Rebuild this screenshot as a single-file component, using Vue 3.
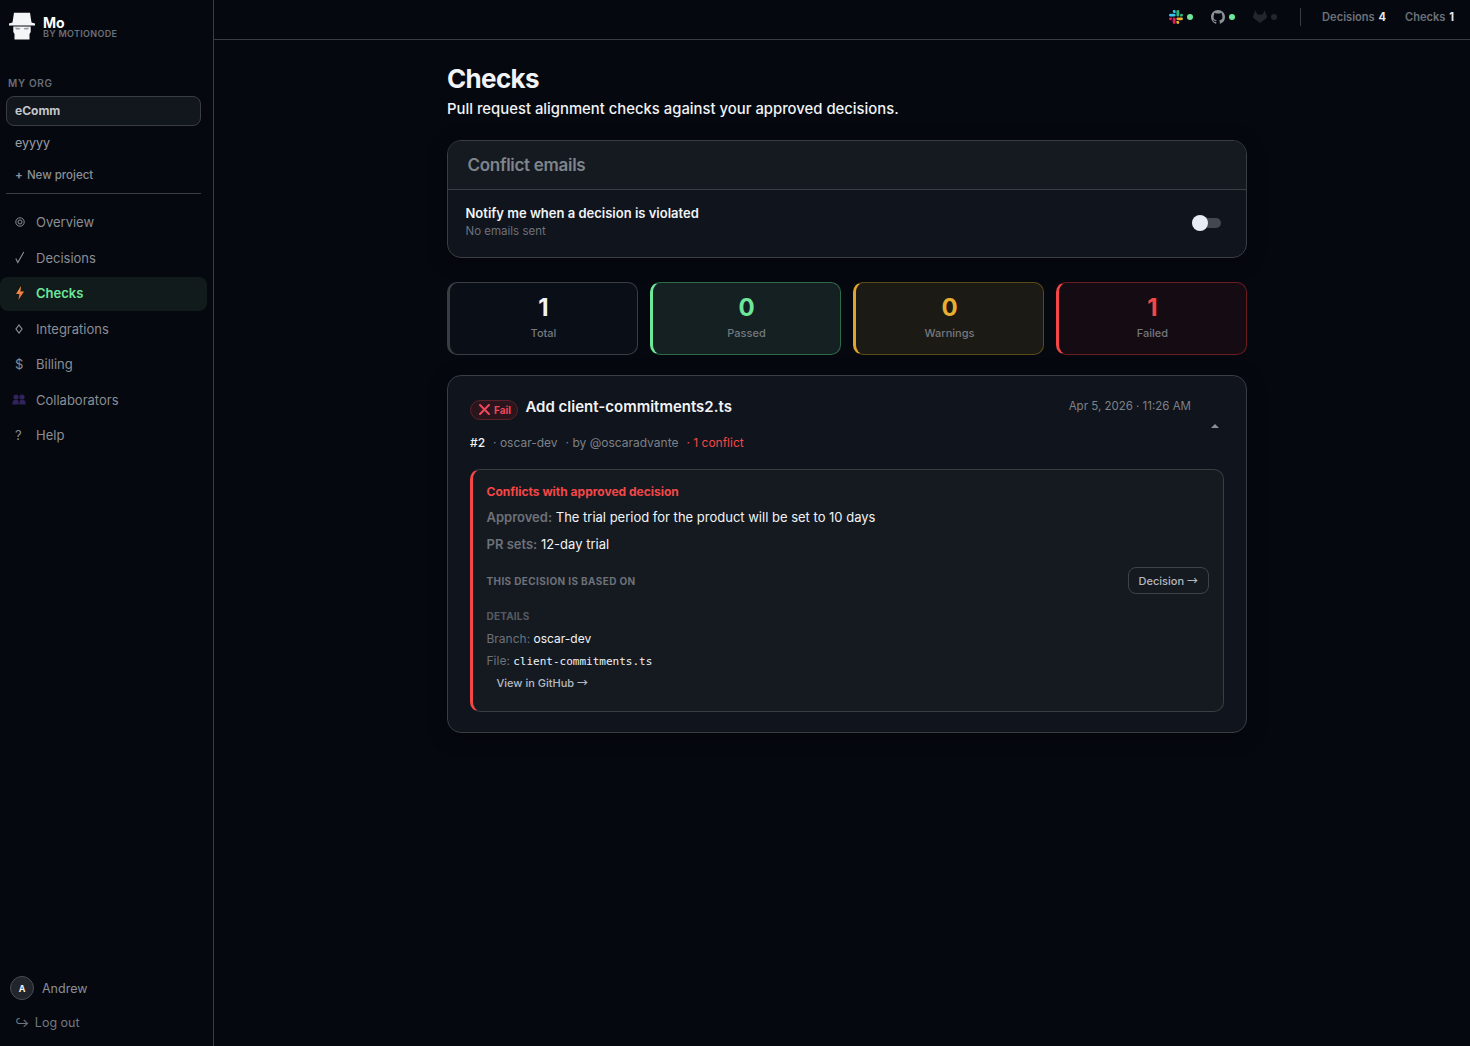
<template>
  <div class="app">
    <aside class="sidebar">
      <div class="brand">
        <svg class="brand__logo" width="28" height="28" viewBox="0 0 28 28">
          <path d="M6 0.7 L22 0.7 L23.5 10.5 L27 11.5 L27 13.4 L1 13.4 L1 11.5 L4.5 10.5 Z" fill="#f4f5f7" />
          <path d="M5.3 14.5 L22.7 14.5 L22.7 20 L21.5 22 L21.5 27.5 L6.5 27.5 L6.5 22 L5.3 20 Z" fill="#f4f5f7" />
          <path d="M7 15.5 L12.5 16 L11.5 17.5 L8 17.5 Z M21 15.5 L15.5 16 L16.5 17.5 L20 17.5 Z" fill="#9a9ea5" />
        </svg>
        <div class="brand__text">
          <div class="brand__name">Mo</div>
          <div class="brand__by">BY MOTIONODE</div>
        </div>
      </div>

      <div class="org-label">MY ORG</div>
      <div class="project project--active">eComm</div>
      <div class="project">eyyyy</div>
      <div class="new-project"><span class="new-project__plus">+</span> New project</div>
      <div class="side-rule"></div>

      <nav class="nav">
        <a v-for="item in navItems" :key="item.label" class="nav__item" :class="{ 'nav__item--active': item.active }">
          <span class="nav__icon">
            <svg v-if="item.icon === 'bolt'" width="10" height="14" viewBox="0 0 10 14">
              <defs>
                <linearGradient id="bolt-fill" x1="0" y1="0" x2="0" y2="1">
                  <stop offset="0" stop-color="#f9a03f" />
                  <stop offset="1" stop-color="#f2603c" />
                </linearGradient>
              </defs>
              <path d="M6 0 L1 8 L4.4 8 L3.4 14 L9 5.6 L5.4 5.6 Z" fill="url(#bolt-fill)" />
            </svg>
            <svg v-else-if="item.icon === 'people'" class="nav__people" width="14" height="11" viewBox="0 0 14 11">
              <circle cx="4" cy="3" r="2.6" fill="#33235c" />
              <circle cx="10" cy="3" r="2.6" fill="#33235c" />
              <path d="M0.5 10.5 V8 Q0.5 6 3 6 H5 Q6.6 6 6.6 8 V10.5 Z M7.4 10.5 V8 Q7.4 6 9 6 H11 Q13.5 6 13.5 8 V10.5 Z" fill="#33235c" />
            </svg>
            <svg v-else-if="item.icon === 'diamond'" width="8" height="10" viewBox="0 0 8 10">
              <path d="M4 1 L7 5 L4 9 L1 5 Z" fill="none" stroke="#8a8e95" stroke-width="1.2" />
            </svg>
            <svg v-else-if="item.icon === 'target'" width="10" height="10" viewBox="0 0 10 10">
              <circle cx="5" cy="5" r="4.2" fill="none" stroke="#8a8e95" stroke-width="1" />
              <circle cx="5" cy="5" r="2" fill="none" stroke="#8a8e95" stroke-width="1" />
            </svg>
            <svg v-else-if="item.icon === 'check'" width="10" height="13" viewBox="0 0 10 13">
              <path d="M0.8 7.4 L2.8 11.6 L8.8 1" fill="none" stroke="#8a8e95" stroke-width="1.1" />
            </svg>
            <template v-else>{{ item.icon }}</template>
          </span>
          <span>{{ item.label }}</span>
        </a>
      </nav>

      <div class="side-foot">
        <div class="user">
          <span class="user__avatar">A</span>
          <span>Andrew</span>
        </div>
        <div class="logout"><span class="logout__icon">↪</span> Log out</div>
      </div>
    </aside>

    <div class="body">
      <header class="topbar">
        <div class="status">
          <svg width="14" height="14" viewBox="0 0 24 24">
            <path fill="#e01e5a" d="M5.042 15.165a2.528 2.528 0 0 1-2.52 2.523A2.528 2.528 0 0 1 0 15.165a2.527 2.527 0 0 1 2.522-2.52h2.52v2.52zM6.313 15.165a2.527 2.527 0 0 1 2.521-2.52 2.527 2.527 0 0 1 2.521 2.52v6.313A2.528 2.528 0 0 1 8.834 24a2.528 2.528 0 0 1-2.521-2.522v-6.313z" />
            <path fill="#36c5f0" d="M8.834 5.042a2.528 2.528 0 0 1-2.521-2.52A2.528 2.528 0 0 1 8.834 0a2.528 2.528 0 0 1 2.521 2.522v2.52H8.834zM8.834 6.313a2.528 2.528 0 0 1 2.521 2.521 2.528 2.528 0 0 1-2.521 2.521H2.522A2.528 2.528 0 0 1 0 8.834a2.528 2.528 0 0 1 2.522-2.521h6.312z" />
            <path fill="#2eb67d" d="M18.956 8.834a2.528 2.528 0 0 1 2.522-2.521A2.528 2.528 0 0 1 24 8.834a2.528 2.528 0 0 1-2.522 2.521h-2.522V8.834zM17.688 8.834a2.528 2.528 0 0 1-2.523 2.521 2.527 2.527 0 0 1-2.52-2.521V2.522A2.527 2.527 0 0 1 15.165 0a2.528 2.528 0 0 1 2.523 2.522v6.312z" />
            <path fill="#ecb22e" d="M15.165 18.956a2.528 2.528 0 0 1 2.523 2.522A2.528 2.528 0 0 1 15.165 24a2.527 2.527 0 0 1-2.52-2.522v-2.522h2.52zM15.165 17.688a2.527 2.527 0 0 1-2.52-2.523 2.526 2.526 0 0 1 2.52-2.52h6.313A2.527 2.527 0 0 1 24 15.165a2.528 2.528 0 0 1-2.522 2.523h-6.313z" />
          </svg>
          <span class="dot dot--on"></span>
        </div>
        <div class="status">
          <svg width="14" height="14" viewBox="0 0 16 16">
            <path fill="#8b8f96" d="M8 0C3.58 0 0 3.58 0 8c0 3.54 2.29 6.53 5.47 7.59.4.07.55-.17.55-.38 0-.19-.01-.82-.01-1.49-2.01.37-2.53-.49-2.69-.94-.09-.23-.48-.94-.82-1.13-.28-.15-.68-.52-.01-.53.63-.01 1.08.58 1.23.82.72 1.21 1.87.87 2.33.66.07-.52.28-.87.51-1.07-1.78-.2-3.64-.89-3.64-3.95 0-.87.31-1.59.82-2.15-.08-.2-.36-1.02.08-2.12 0 0 .67-.21 2.2.82.64-.18 1.32-.27 2-.27s1.36.09 2 .27c1.53-1.04 2.2-.82 2.2-.82.44 1.1.16 1.92.08 2.12.51.56.82 1.27.82 2.15 0 3.07-1.87 3.75-3.65 3.95.29.25.54.73.54 1.48 0 1.07-.01 1.93-.01 2.2 0 .21.15.46.55.38A8.01 8.01 0 0 0 16 8c0-4.42-3.58-8-8-8z" />
          </svg>
          <span class="dot dot--on"></span>
        </div>
        <div class="status status--last">
          <svg width="14" height="13" viewBox="0 0 14 13">
            <path fill="#23262d" d="M7 13 L0.4 8 L0 6.5 L2.4 0.2 L4.4 4.6 H9.6 L11.6 0.2 L14 6.5 L13.6 8 Z" />
          </svg>
          <span class="dot dot--off"></span>
        </div>
        <span class="topbar__rule"></span>
        <span class="topbar__stat">Decisions <b>4</b></span>
        <span class="topbar__stat">Checks <b>1</b></span>
      </header>

      <main class="main">
        <div class="content">
          <h1 class="title">Checks</h1>
          <p class="subtitle">Pull request alignment checks against your approved decisions.</p>

          <section class="email-card">
            <div class="email-card__head">Conflict emails</div>
            <div class="email-card__row">
              <div class="email-card__text">
                <div class="email-card__label">Notify me when a decision is violated</div>
                <div class="email-card__sub">No emails sent</div>
              </div>
              <span class="toggle"><span class="toggle__knob"></span></span>
            </div>
          </section>

          <section class="stats">
            <div v-for="s in stats" :key="s.label" class="stat" :class="'stat--' + s.kind">
              <div class="stat__num">{{ s.value }}</div>
              <div class="stat__label">{{ s.label }}</div>
            </div>
          </section>

          <section class="pr">
            <div class="pr__top">
              <span class="badge">
                <svg width="11" height="11" viewBox="0 0 11 11">
                  <path d="M1 1 L10 10 M10 1 L1 10" stroke="#f0455a" stroke-width="2" stroke-linecap="round" />
                </svg>
                Fail
              </span>
              <span class="pr__title">Add client-commitments2.ts</span>
              <span class="pr__date">Apr 5, 2026 · 11:26 AM</span>
            </div>
            <div class="pr__meta">
              <span class="pr__num">#2</span>
              <span>· oscar-dev</span>
              <span>· by @oscaradvante</span>
              <span class="pr__conflict">· 1 conflict</span>
              <span class="pr__caret"></span>
            </div>

            <div class="conflict">
              <div class="conflict__head">Conflicts with approved decision</div>
              <div class="conflict__line"><b>Approved:</b> The trial period for the product will be set to 10 days</div>
              <div class="conflict__line"><b>PR sets:</b> 12-day trial</div>
              <div class="conflict__based">
                <span class="conflict__caps">THIS DECISION IS BASED ON</span>
                <button class="btn" type="button">Decision <span class="arrow">→</span></button>
              </div>
              <div class="conflict__details">DETAILS</div>
              <div class="conflict__small conflict__small--first"><span>Branch:</span> oscar-dev</div>
              <div class="conflict__small"><span>File:</span> <code>client-commitments.ts</code></div>
              <a class="conflict__link">View in GitHub <span class="arrow">→</span></a>
            </div>
          </section>
        </div>
      </main>
    </div>
  </div>
</template>

<script setup>
const navItems = [
  { label: 'Overview', icon: 'target' },
  { label: 'Decisions', icon: 'check' },
  { label: 'Checks', icon: 'bolt', active: true },
  { label: 'Integrations', icon: 'diamond' },
  { label: 'Billing', icon: '$' },
  { label: 'Collaborators', icon: 'people' },
  { label: 'Help', icon: '?' }
]

const stats = [
  { label: 'Total', value: 1, kind: 'total' },
  { label: 'Passed', value: 0, kind: 'pass' },
  { label: 'Warnings', value: 0, kind: 'warn' },
  { label: 'Failed', value: 1, kind: 'fail' }
]
</script>

<style>
html,
body {
  background: #05080f;
}
</style>

<style scoped>
.app {
  display: flex;
  min-height: 1046px;
  background: #05080f;
  color: #f1f3f6;
  font-family: Inter, "Liberation Sans", sans-serif;
}

.sidebar {
  width: 213px;
  flex: none;
  border-right: 1px solid #3a3d42;
  display: flex;
  flex-direction: column;
  height: 1046px;
}

.brand {
  display: flex;
  align-items: flex-start;
  gap: 7px;
  padding: 12px 0 0 8px;
  height: 30px;
}

.brand__name {
  font-size: 14px;
  font-weight: 700;
  line-height: 11px;
  margin-top: 5px;
  color: #fff;
}

.brand__by {
  font-size: 9px;
  font-weight: 600;
  line-height: 11px;
  letter-spacing: 0.3px;
  color: #6b7078;
}

.org-label {
  margin: 35px 0 0 8px;
  font-size: 10px;
  font-weight: 600;
  line-height: 12px;
  letter-spacing: 0.7px;
  color: #686d75;
}

.project {
  margin: 2px 12px 0 6px;
  padding: 0 9px;
  height: 30px;
  line-height: 30px;
  font-size: 12.5px;
  color: #9a9ea5;
}

.project--active {
  margin-top: 7px;
  padding: 0 8px;
  box-sizing: border-box;
  line-height: 27px;
  border: 1px solid #3a3d42;
  border-radius: 8px;
  background: #12161d;
  font-size: 12px;
  font-weight: 700;
  color: #c3c6cb;
}

.new-project {
  margin: 2px 0 0 15px;
  height: 30px;
  line-height: 31px;
  font-size: 11.5px;
  font-weight: 500;
  color: #8b9098;
}

.new-project__plus {
  font-weight: 700;
  margin-right: 1px;
}

.side-rule {
  margin: 3px 12px 0 6px;
  height: 1px;
  background: #3a3d42;
}

.nav {
  margin-top: 12px;
  display: flex;
  flex-direction: column;
}

.nav__item {
  display: flex;
  align-items: center;
  box-sizing: border-box;
  height: 34px;
  margin: 0 6px 1.5px 0;
  padding: 0 0 2px 14px;
  border-radius: 8px;
  font-size: 13px;
  color: #8a8e95;
}

.nav__item--active {
  background: #121b1b;
  color: #6ee79b;
  font-weight: 600;
}

.nav__icon {
  box-sizing: border-box;
  width: 22px;
  flex: none;
  padding-left: 1px;
  font-size: 13px;
  display: flex;
  align-items: center;
}

.nav__people {
  margin-left: -3px;
}

.side-foot {
  margin-top: auto;
  padding: 0 0 7px 10px;
}

.user {
  display: flex;
  align-items: center;
  gap: 8px;
  font-size: 12.5px;
  color: #8a8e95;
}

.user__avatar {
  width: 22px;
  height: 22px;
  border-radius: 50%;
  border: 1px solid #4a4d52;
  background: #22262c;
  display: flex;
  align-items: center;
  justify-content: center;
  font-size: 9px;
  font-weight: 700;
  color: #f1f3f6;
}

.logout {
  margin-top: 13px;
  padding: 0 0 6px 5px;
  font-size: 12.5px;
  line-height: 20px;
  color: #737880;
}

.logout__icon {
  margin-right: 2px;
}

.body {
  flex: 1;
  min-width: 0;
}

.topbar {
  box-sizing: content-box;
  height: 33px;
  padding: 0 16px 6px 0;
  border-bottom: 1px solid #3a3d42;
  display: flex;
  align-items: center;
  justify-content: flex-end;
  font-size: 11.1px;
  font-weight: 600;
  color: #6d7179;
}

.status {
  display: flex;
  align-items: center;
  gap: 4px;
  margin-right: 18px;
}

.status--last {
  margin-right: 17px;
}

.dot {
  width: 6px;
  height: 6px;
  border-radius: 50%;
}

.dot--on {
  background: #6ee79b;
}

.dot--off {
  background: #23262d;
}

.topbar__rule {
  width: 1px;
  height: 18px;
  background: #3a3d42;
  margin: 0 21px 0 6px;
}

.topbar__stat {
  margin-left: 19px;
}

.topbar__rule + .topbar__stat {
  margin-left: 0;
}

.topbar__stat b {
  color: #e6e8ec;
  font-weight: 700;
  margin-left: 1px;
}

.main {
  padding: 24px 0 0 10px;
  display: flex;
  justify-content: center;
}

.content {
  width: 800px;
}

.title {
  margin: 0;
  font-size: 26px;
  line-height: 30px;
  font-weight: 700;
  letter-spacing: -0.65px;
  color: #f1f3f6;
}

.subtitle {
  margin: 5px 0 0;
  font-size: 14.85px;
  line-height: 20px;
  font-weight: 500;
  color: #f1f3f6;
}

.email-card {
  margin-top: 21px;
  border: 1px solid #3a3d42;
  border-radius: 14px;
  background: #10141c;
  box-shadow: 0 4px 20px rgba(0, 0, 0, 0.3);
  overflow: hidden;
}

.email-card__head {
  height: 48px;
  line-height: 49px;
  padding-left: 19.5px;
  background: #151a21;
  border-bottom: 1px solid #3a3d42;
  font-size: 17px;
  font-weight: 600;
  letter-spacing: -0.3px;
  color: #7f848b;
}

.email-card__row {
  height: 67px;
  display: flex;
  align-items: center;
  justify-content: space-between;
  padding: 0 25px 0 17.5px;
}

.email-card__text {
  margin-bottom: 2px;
}

.email-card__label {
  font-size: 13px;
  line-height: 18px;
  font-weight: 600;
  color: #f1f3f6;
}

.email-card__sub {
  font-size: 11.5px;
  line-height: 19px;
  color: #6d7179;
}

.toggle {
  position: relative;
  width: 29px;
  height: 10px;
  margin-bottom: 2px;
  border-radius: 5px;
  background: #44474e;
}

.toggle__knob {
  position: absolute;
  left: 0;
  top: -3px;
  width: 16px;
  height: 16px;
  border-radius: 50%;
  background: #e8ecf4;
}

.stats {
  margin-top: 24px;
  display: grid;
  grid-template-columns: repeat(4, 1fr);
  gap: 12px;
}

.stat {
  box-sizing: border-box;
  height: 73px;
  border: 1px solid #3a3d42;
  border-left-width: 3px;
  border-radius: 10px;
  background: #0a0e17;
  text-align: center;
  padding-top: 10px;
}

.stat__num {
  font-size: 24px;
  line-height: 30px;
  font-weight: 700;
  color: #f1f3f6;
}

.stat__label {
  margin-top: 2px;
  font-size: 11px;
  line-height: 16px;
  font-weight: 500;
  color: #74787f;
}

.stat--pass {
  border-color: #2f6a49;
  border-left-color: #6ee79b;
  background: #152023;
}

.stat--pass .stat__num {
  color: #6ee79b;
}

.stat--warn {
  border-color: #5c4a16;
  border-left-color: #e0a52c;
  background: #1c1a14;
}

.stat--warn .stat__num {
  color: #e8ae32;
}

.stat--fail {
  border-color: #6a1c20;
  border-left-color: #f44747;
  background: #150b12;
}

.stat--fail .stat__num {
  color: #f44747;
}

.pr {
  margin-top: 20px;
  border: 1px solid #3a3d42;
  border-radius: 14px;
  background: #10141c;
  box-shadow: 0 4px 20px rgba(0, 0, 0, 0.3);
  padding: 20px 22px 20px 22px;
}

.pr__top {
  display: flex;
  align-items: center;
  height: 22px;
}

.badge {
  display: inline-flex;
  align-items: center;
  gap: 4px;
  box-sizing: border-box;
  height: 20px;
  margin-top: 5px;
  padding: 0 6px 0 8px;
  border: 1px solid #5a2228;
  border-radius: 10px;
  background: #2a151c;
  font-size: 10px;
  font-weight: 700;
  color: #f0455a;
}

.pr__title {
  margin: 0 0 2px 7.5px;
  font-size: 15px;
  font-weight: 600;
  color: #f1f3f6;
}

.pr__date {
  margin: 0 33px 2px auto;
  font-size: 11.5px;
  color: #7d8188;
}

.pr__meta {
  position: relative;
  display: flex;
  gap: 8px;
  margin-top: 16px;
  font-size: 12px;
  line-height: 17px;
  color: #7d8188;
}

.pr__num {
  color: #f1f3f6;
  font-weight: 500;
}

.pr__conflict {
  color: #f44747;
}

.pr__caret {
  position: absolute;
  right: 5px;
  top: -10px;
  width: 0;
  height: 0;
  border-left: 4px solid transparent;
  border-right: 4px solid transparent;
  border-bottom: 4px solid #8b8f96;
}

.conflict {
  box-sizing: border-box;
  height: 243px;
  margin-top: 18px;
  border: 1px solid #3a3d42;
  border-left: 3px solid #f44747;
  border-radius: 10px;
  background: #151a21;
  padding: 13px 14px 0 13.5px;
}

.conflict__head {
  font-size: 12px;
  line-height: 18px;
  font-weight: 700;
  color: #f44747;
}

.conflict__line {
  margin-top: 7px;
  font-size: 13px;
  line-height: 19px;
  color: #f1f3f6;
}

.conflict__line + .conflict__line {
  margin-top: 8px;
}

.conflict__line b {
  font-weight: 600;
  color: #6d7179;
}

.conflict__based {
  display: flex;
  align-items: center;
  justify-content: space-between;
  margin-top: 13px;
}

.conflict__caps {
  font-size: 10px;
  font-weight: 700;
  letter-spacing: 0.38px;
  color: #6d7179;
}

.btn {
  box-sizing: border-box;
  height: 27px;
  padding: 0 10px;
  border: 1px solid #3f4349;
  border-radius: 8px;
  background: transparent;
  font-family: inherit;
  font-size: 11px;
  font-weight: 500;
  color: #b5b8bd;
}

.arrow {
  font-family: "Noto Sans CJK JP", sans-serif;
  line-height: 1;
}

.conflict__details {
  margin-top: 15px;
  font-size: 10px;
  line-height: 14px;
  font-weight: 700;
  letter-spacing: 0.2px;
  color: #555a62;
}

.conflict__small {
  margin-top: 7px;
  font-size: 12px;
  line-height: 15px;
  color: #f1f3f6;
}

.conflict__small--first {
  margin-top: 8px;
}

.conflict__small span {
  color: #6d7179;
}

.conflict__small code {
  font-family: "DejaVu Sans Mono", monospace;
  font-size: 11px;
}

.conflict__link {
  display: block;
  margin: 7px 0 0 10px;
  font-size: 11px;
  line-height: 15px;
  font-weight: 500;
  color: #b5bac2;
}
</style>
